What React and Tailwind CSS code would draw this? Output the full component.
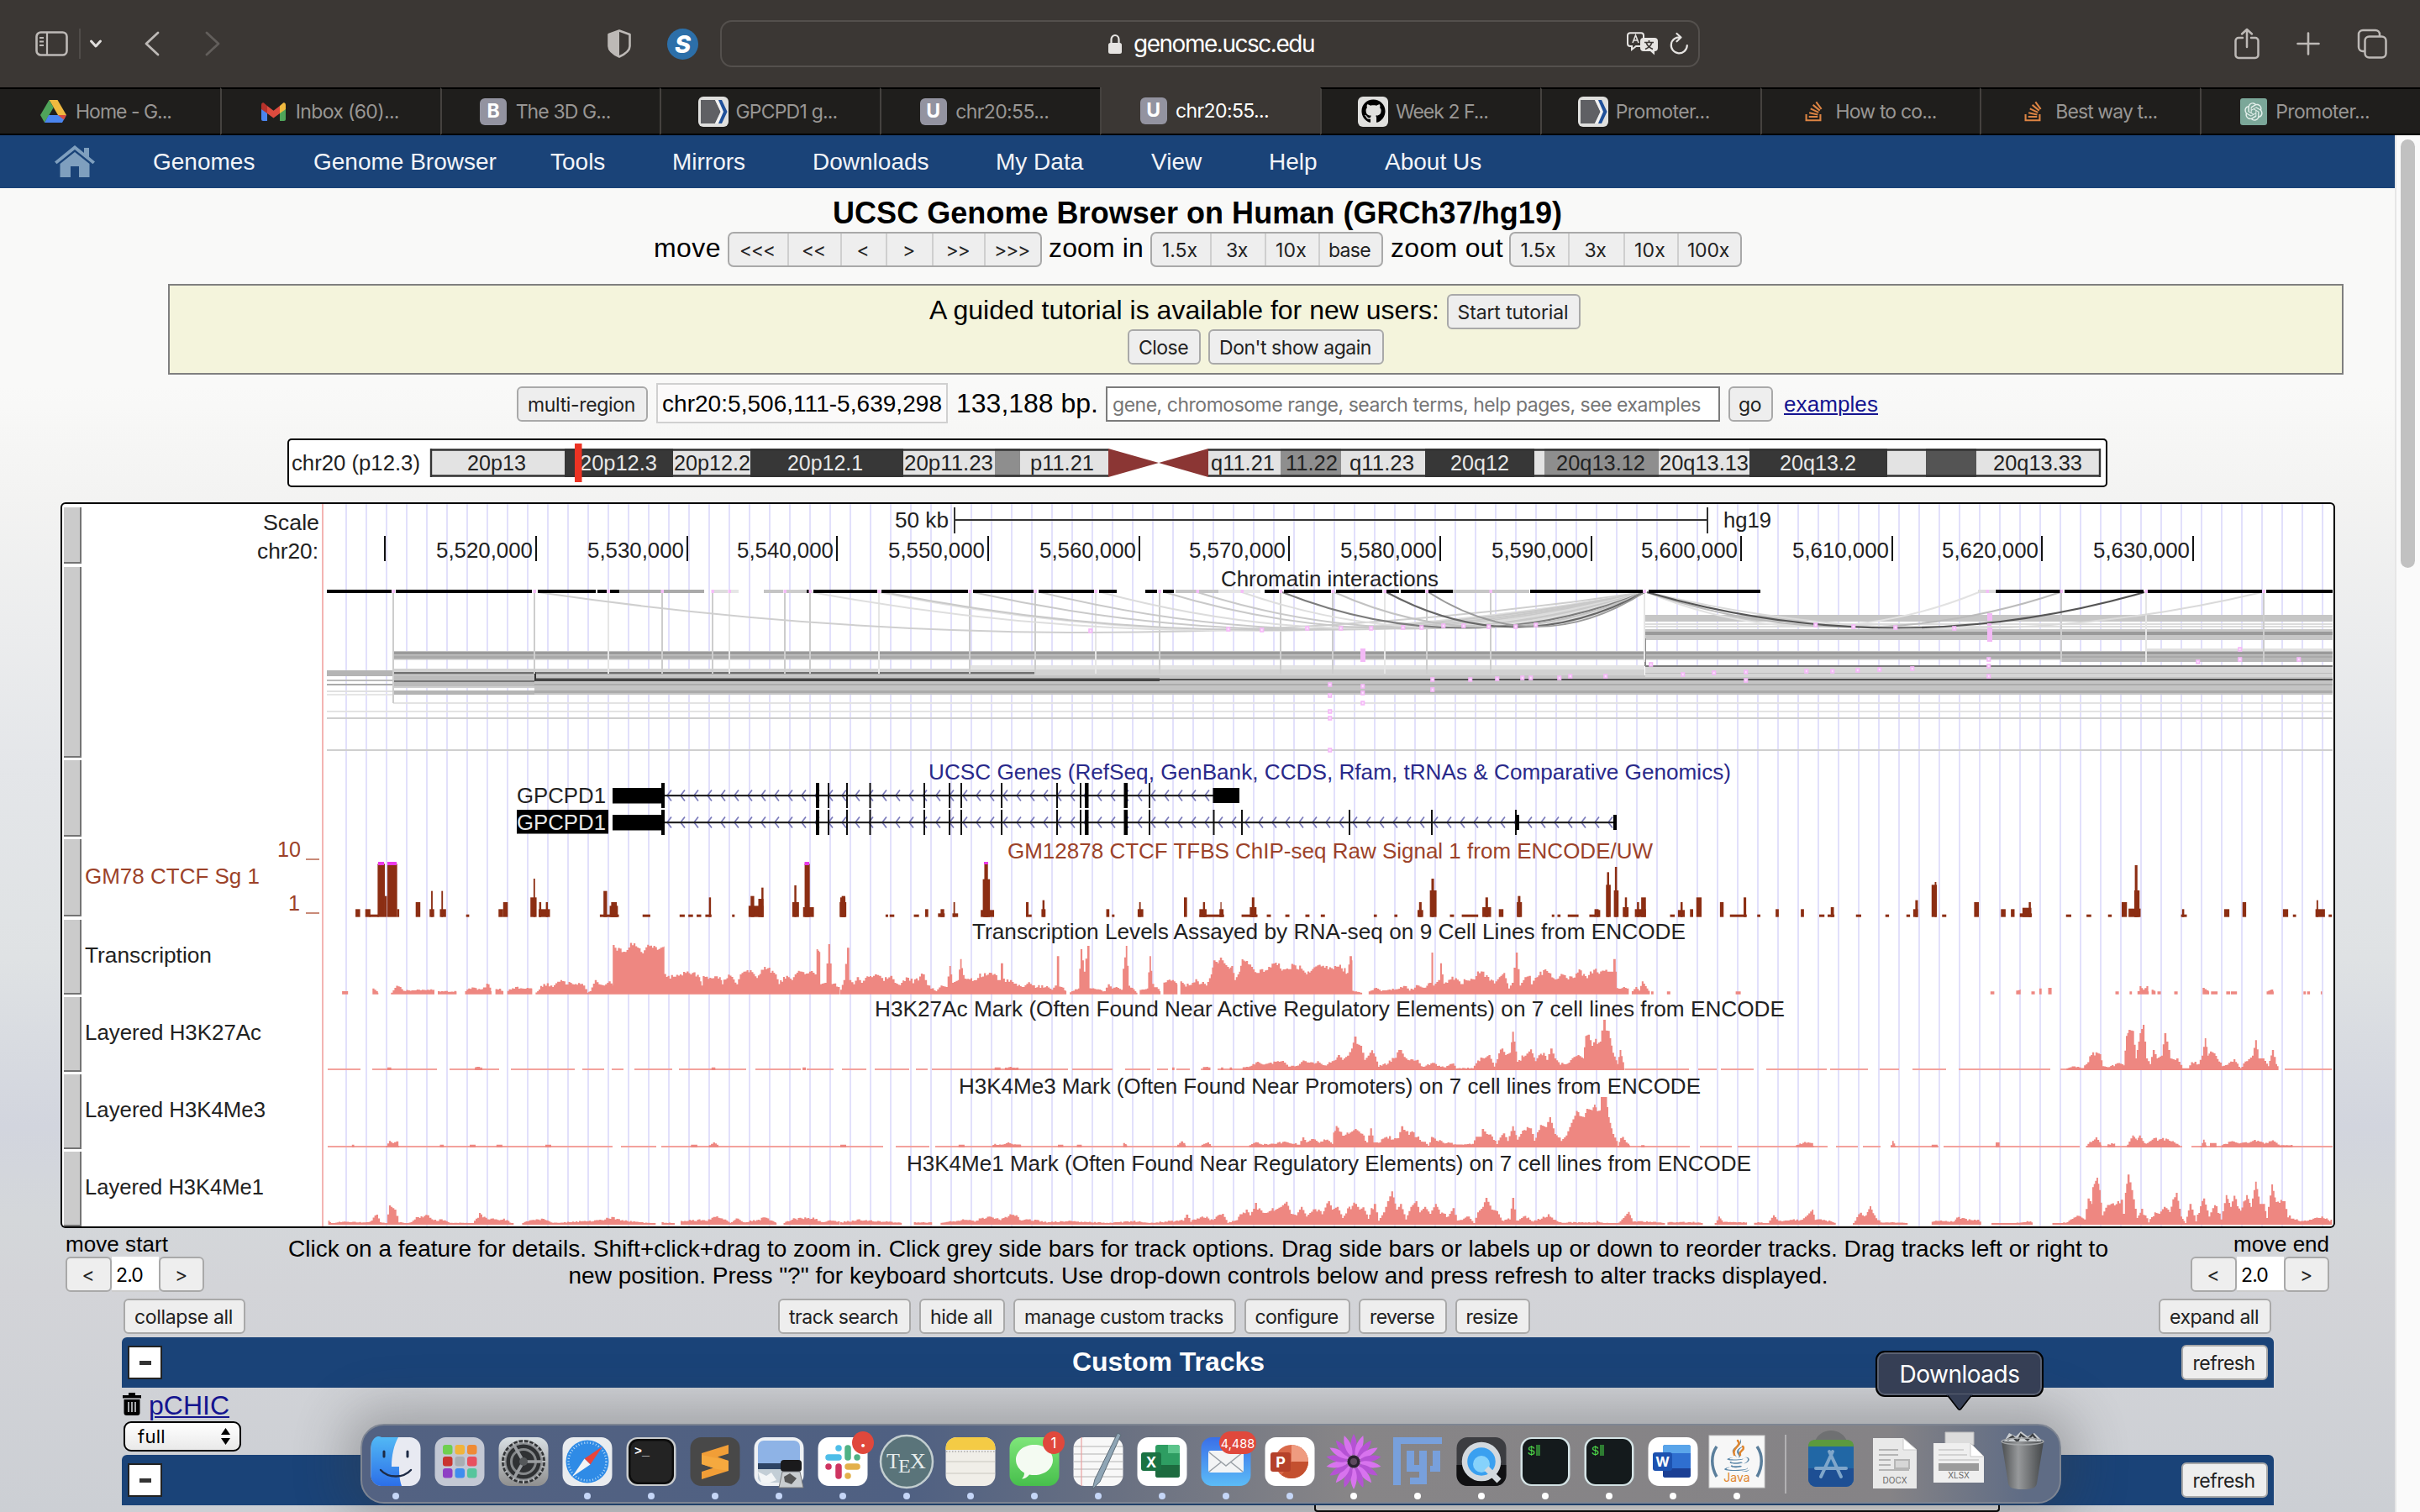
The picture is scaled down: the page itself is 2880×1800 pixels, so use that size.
import React, { useLayoutEffect, useRef } from "react";
import { FaStackOverflow, FaGithub, FaJava } from "react-icons/fa";
import { RiOpenaiFill } from "react-icons/ri";

/* Text spread over an exact width by letter spacing measured at run time. */
function Fit({ w, className = "", children }) {
  const ref = useRef(null);
  useLayoutEffect(() => {
    const el = ref.current;
    el.style.letterSpacing = "0px";
    const natural = el.getBoundingClientRect().width;
    el.style.letterSpacing = (w - natural) / children.length + "px";
  }, [w, children]);
  return (
    <span ref={ref} className={"inline-block whitespace-pre " + className}>
      {children}
    </span>
  );
}

const UI = "font-['Inter',sans-serif]";

function Btn({ className = "", tw, children }) {
  return (
    <span
      className={
        "flex h-[42px] shrink-0 items-center justify-center rounded-[6px] border-2 border-[#a9a9a9] bg-[#eeeeee] pt-[3px] pr-[2px] text-[23px] leading-none text-[#222] font-['Inter',sans-serif] " +
        className
      }
    >
      <Fit w={tw}>{children}</Fit>
    </span>
  );
}

function Group({ items, className = "" }) {
  return (
    <div className={"flex h-[42px] overflow-hidden rounded-[7px] border-2 border-[#a9a9a9] bg-[#eeeeee] " + className}>
      {items.map(([t, cls, tw], i) => (
        <span
          key={i}
          className={
            "flex shrink-0 items-center justify-center pt-[3px] pr-[3px] text-[23px] leading-none text-[#222] font-['Inter',sans-serif] " +
            (i ? "border-l-2 border-[#cfcfcf] " : "") +
            cls
          }
        >
          <Fit w={tw}>{t}</Fit>
        </span>
      ))}
    </div>
  );
}

/* ---------- browser chrome ---------- */

function Toolbar() {
  return (
    <div className="flex h-[104px] w-full items-center bg-[#3b3734] text-[#bdb9b6]">
      <svg className="ml-[42px] h-[30px] w-[39px]" viewBox="0 0 39 30" fill="none" stroke="currentColor" strokeWidth="2.6">
        <rect x="1.5" y="1.5" width="36" height="27" rx="5" />
        <path d="M14 2v26M5 8h5M5 12.500h5M5 17h5" strokeWidth="2.2" />
      </svg>
      <div className="ml-[13px] h-[36px] w-[2px] bg-[#504c49]" />
      <svg className="ml-[10px] h-[12px] w-[16px]" viewBox="0 0 16 12" fill="none" stroke="#e0dedc" strokeWidth="3" strokeLinecap="round" strokeLinejoin="round">
        <path d="M2.500 3 8 9l5.500-6" />
      </svg>
      <svg className="ml-[50px] h-[30px] w-[18px]" viewBox="0 0 18 30" fill="none" stroke="currentColor" strokeWidth="2.800" strokeLinecap="round" strokeLinejoin="round">
        <path d="M16 2 2 15l14 13" />
      </svg>
      <svg className="ml-[54px] h-[30px] w-[18px]" viewBox="0 0 18 30" fill="none" stroke="#625e5b" strokeWidth="2.800" strokeLinecap="round" strokeLinejoin="round">
        <path d="m2 2 14 13L2 28" />
      </svg>
      <svg className="ml-[461px] h-[34px] w-[28px]" viewBox="0 0 28 34">
        <path d="M14 1.500 26.500 6v14c0 6-7 10-12.500 12.500C8.500 30 1.500 26 1.500 20V6z" fill="none" stroke="currentColor" strokeWidth="2.600" strokeLinejoin="round" />
        <path d="M14 2v30C8.500 30 1.500 26 1.500 20V6z" fill="currentColor" />
      </svg>
      <div className="ml-[43px] flex size-[37px] items-center justify-center rounded-full bg-[#2c6fa9] font-['Inter',sans-serif] text-[29px] leading-none font-extrabold text-white italic">
        S
      </div>
      <div className="ml-[26px] flex h-[56px] w-[1166px] items-center rounded-[14px] border-2 border-[#54504d] text-[#e6e4e2]">
        <svg className="ml-[459px] h-[25px] w-[18px]" viewBox="0 0 18 25">
          <path d="M4.500 12V7a4.500 5 0 0 1 9 0v5" fill="none" stroke="currentColor" strokeWidth="2.200" />
          <rect x="1" y="11" width="16" height="13" rx="2.500" fill="currentColor" />
        </svg>
        <div className={"ml-[13px] text-[28px] leading-none text-white " + UI}>
          <Fit w={215}>genome.ucsc.edu</Fit>
        </div>
        <svg className="ml-[372px] h-[28px] w-[38px]" viewBox="0 0 38 28">
          <path d="M4 1.200h13a3 3 0 0 1 3 3V14a3 3 0 0 1-3 3h-6l-5 4v-4H4a3 3 0 0 1-3-3V4.200a3 3 0 0 1 3-3z" fill="none" stroke="currentColor" strokeWidth="2" />
          <path d="m7 13 3.500-9L14 13M8.200 10h4.600" fill="none" stroke="currentColor" strokeWidth="1.600" />
          <path d="M20 7h13a4 4 0 0 1 4 4v8a4 4 0 0 1-4 4v4.500L28 23h-8a4 4 0 0 1-4-4v-8a4 4 0 0 1 4-4z" fill="currentColor" />
          <path d="M21 12.500h11M26.500 10v2.500M30 12.500c-1.500 4-4 6.500-8 8M23 12.500c1.500 4 4 6.500 8 8" fill="none" stroke="#3b3734" strokeWidth="1.700" />
        </svg>
        <svg className="ml-[12px] h-[28px] w-[24px]" viewBox="0 0 24 28" fill="none" stroke="currentColor" strokeWidth="2.200" strokeLinecap="round" strokeLinejoin="round">
          <path d="M14 6.500a9.500 9.500 0 1 0 7.800 9.500M9.500 2l5 4.500-5 4.800" />
        </svg>
      </div>
      <svg className="ml-[636px] h-[38px] w-[30px]" viewBox="0 0 30 38" fill="none" stroke="currentColor" strokeWidth="2.500" strokeLinecap="round" strokeLinejoin="round">
        <path d="M10 12H5a3.500 3.500 0 0 0-3.500 3.500v17A3.500 3.500 0 0 0 5 36h20a3.500 3.500 0 0 0 3.500-3.500v-17A3.500 3.500 0 0 0 25 12h-5M15 23V2M9 7.500 15 2l6 5.500" />
      </svg>
      <svg className="ml-[44px] size-[28px]" viewBox="0 0 28 28" stroke="currentColor" strokeWidth="2.600" strokeLinecap="round">
        <path d="M14 1.500v25M1.500 14h25" />
      </svg>
      <svg className="ml-[44px] size-[36px]" viewBox="0 0 36 36" fill="none" stroke="currentColor" strokeWidth="2.500">
        <rect x="9.500" y="9.500" width="25" height="25" rx="5" />
        <path d="M9 27H7a5 5 0 0 1-5-5V7a5 5 0 0 1 5-5h15a5 5 0 0 1 5 5v2" />
      </svg>
    </div>
  );
}

function Letter({ c }) {
  return (
    <div className="flex size-[32px] items-center justify-center rounded-[6px] bg-[#9393a0] font-['Inter',sans-serif] text-[23px] leading-none font-bold text-white">
      {c}
    </div>
  );
}

function Chevron() {
  return (
    <svg className="size-[36px]" viewBox="0 0 36 36">
      <rect width="36" height="36" rx="6" fill="#e0e0de" />
      <path d="M3 4h17l7 14-7 14H3z" fill="#5f6064" />
      <path d="M20 4h3l7 14-7 14h-3l6.500-14z" fill="#f2f2f2" />
      <path d="M24 4h4l6.500 14L28 32h-4l6-14z" fill="#20519b" />
    </svg>
  );
}

const so = <FaStackOverflow className="size-[27px] text-[#dd8443]" />;

const tabs = [
  [
    "Home - G...",
    <svg className="h-[27px] w-[31px]" viewBox="0 0 31 27">
      <path d="M10.500 0h10L31 18H21z" fill="#f0b93f" />
      <path d="M10.500 0 0 18l5 9 10.700-18z" fill="#4fa45a" />
      <path d="M10 18h21l-5 9H5z" fill="#4b85ee" />
      <path d="M21 18h10l-3 5.500z" fill="#d94b3d" />
    </svg>,
  ],
  [
    "Inbox (60)...",
    <svg className="h-[22px] w-[29px]" viewBox="0 0 29 22">
      <path d="M0 6v14a2 2 0 0 0 2 2h5V9z" fill="#4b85ee" />
      <path d="M29 6v14a2 2 0 0 1-2 2h-5V9z" fill="#4fa45a" />
      <path d="M0 3v5l7 5V4L3 .6C1.500-.4 0 1 0 3z" fill="#b7322b" />
      <path d="M29 3v5l-7 5V4L26 .6c1.500-1 3 .4 3 2.400z" fill="#f0b93f" />
      <path d="m7 4 7.500 5.800L22 4v9l-7.500 5.600L7 13z" fill="#dd4b3e" />
    </svg>,
  ],
  ["The 3D G...", <Letter c="B" />],
  ["GPCPD1 g...", <Chevron />],
  ["chr20:55...", <Letter c="U" />],
  ["chr20:55...", <Letter c="U" />],
  [
    "Week 2 F...",
    <div className="flex size-[36px] items-center justify-center rounded-[6px] bg-[#e0e0de]">
      <FaGithub className="size-[29px] text-black" />
    </div>,
  ],
  ["Promoter...", <Chevron />],
  ["How to co...", so],
  ["Best way t...", so],
  [
    "Promoter...",
    <div className="flex size-[32px] items-center justify-center rounded-[3px] bg-[#7ba799]">
      <RiOpenaiFill className="size-[26px] text-[#e4efeb]" />
    </div>,
  ],
];
const tabW = [114, 123, 113, 121, 111, 111, 110, 112, 120, 121, 112];

function TabBar() {
  return (
    <div className="flex h-[57px] w-full">
      {tabs.map(([t, icon], i) => (
        <div
          key={i}
          className={
            "flex flex-1 items-center overflow-hidden border-b-2 border-b-black font-['Inter',sans-serif] text-[23px] leading-none " +
            (i === 5
              ? "bg-[#3b3734] text-white"
              : "border-t-2 border-t-black bg-[#1f1e1c] text-[#989694]") +
            (i ? " border-l-2 border-l-[#45423f] pl-[43px]" : " pl-[45px]")
          }
        >
          <div className="flex w-[37px] shrink-0 justify-center">{icon}</div>
          <div className="ml-[8px] pt-[2px]">
            <Fit w={tabW[i]}>{t}</Fit>
          </div>
        </div>
      ))}
    </div>
  );
}

function Nav() {
  return (
    <div className="flex h-[63px] w-full items-center bg-[#1a4378] text-[28px] leading-none whitespace-nowrap text-[#f2f4f8]">
      <div className="w-[182px] pb-[2px] pl-[65px]">
        <svg className="h-[38px] w-[48px]" viewBox="0 0 48 38" fill="#7f9fbe">
          <path d="M24 0 0 19.500l2.500 2.700L24 5l21.500 17.200L48 19.500l-7-5.700V3h-6v6z" />
          <path d="M24 8 6.500 22v16H19V25h10v13h12.500V22z" />
        </svg>
      </div>
      <span className="w-[191px]">Genomes</span>
      <span className="w-[282px]">Genome Browser</span>
      <span className="w-[145px]">Tools</span>
      <span className="w-[167px]">Mirrors</span>
      <span className="w-[218px]">Downloads</span>
      <span className="w-[185px]">My Data</span>
      <span className="w-[140px]">View</span>
      <span className="w-[138px]">Help</span>
      <span>About Us</span>
    </div>
  );
}

/* ---------- chromosome ideogram ---------- */

function L({ x, y, w, children, fill = "#222", size = 26 }) {
  return (
    <text x={x} y={y} textLength={w} lengthAdjust="spacingAndGlyphs" fontSize={size} fill={fill} fontFamily="'Liberation Sans', sans-serif">
      {children}
    </text>
  );
}

const bands = [
  [512, 672, "#e3e3e3", "20p13", 556, 70],
  [672, 801, "#373737", "20p12.3", 690, 92],
  [801, 893, "#e3e3e3", "20p12.2", 802, 91],
  [893, 1075, "#373737", "20p12.1", 937, 90],
  [1075, 1184, "#e3e3e3", "20p11.23", 1076, 106],
  [1184, 1214, "#8e8e8e"],
  [1214, 1319, "#e3e3e3", "p11.21", 1226, 76],
  [1438, 1524, "#e3e3e3", "q11.21", 1441, 76],
  [1524, 1596, "#8e8e8e", "11.22", 1530, 62],
  [1596, 1696, "#e3e3e3", "q11.23", 1606, 77],
  [1696, 1826, "#373737", "20q12", 1726, 70],
  [1826, 1838, "#e3e3e3"],
  [1838, 1974, "#8e8e8e", "20q13.12", 1852, 106],
  [1974, 2082, "#e3e3e3", "20q13.13", 1975, 106],
  [2082, 2246, "#373737", "20q13.2", 2118, 91],
  [2246, 2292, "#e3e3e3"],
  [2292, 2352, "#545454"],
  [2352, 2500, "#e3e3e3", "20q13.33", 2372, 106],
];

function Ideogram() {
  return (
    <div className="ml-[342px] h-[58px] w-[2166px] overflow-hidden rounded-[5px] bg-black p-[2px]">
      <svg className="block h-[54px] w-[2162px] rounded-[3px] bg-white" viewBox="344 524 2162 54">
        <L x={347} y={560} w={153}>chr20 (p12.3)</L>
        {bands.map(([a, b, c, t, tx, tw], i) => (
          <g key={i}>
            <rect x={a} y="534" width={b - a} height="34" fill={c} />
            {t && <L x={tx} y={560} w={tw} fill={c === "#373737" ? "#e8e8e8" : "#222"}>{t}</L>}
          </g>
        ))}
        <path d="M512 535.500H1319M512 566.500H1319M1438 535.500H2500M1438 566.500H2500M513 534V568M2499 534V568" stroke="#333" strokeWidth="2.400" />
        <path d="M1319 534 1379 551 1319 568zM1438 534 1379 551 1438 568z" fill="#8b3634" />
        <rect x="684" y="528" width="8.500" height="46" fill="#ec3323" />
      </svg>
    </div>
  );
}

/* ---------- signal data: x positions and y levels per third of the view ---------- */

const P = [
  [60, 1.6333],
  [1000, 1.6333],
  [1900, 1.6],
];
const X = (p, x) => P[p][0] + x / P[p][1];
const Y = (v) => 1000 + v / 3;
const hash = (n) => {
  const s = Math.sin(n * 127.1 + 11.7) * 43758.5453;
  return s - Math.floor(s);
};

const ctcf = [
  [[593,602,247],[612,622,247],[620,638,266],[636,650,85],[650,654,200],[655,674,85],[674,678,247],[710,719,222],[737,746,247],[740,743,182],[757,769,247],[760,763,182],[808,814,266],[871,880,247],[880,889,222],[933,945,205],[939,942,138],[949,971,247],[950,954,222],[963,967,222],[1068,1105,266],[1075,1082,182],[1087,1103,235],[1090,1101,222],[1151,1166,266],[1223,1233,266],[1240,1249,266],[1256,1265,266],[1273,1285,266],[1280,1284,205],[1325,1330,266],[1357,1386,235],[1361,1368,200],[1376,1386,210],[1382,1386,170],[1442,1455,222],[1446,1450,162],[1463,1484,240],[1466,1476,85],[1534,1547,222],[1538,1545,200]],
  [[0,10,205],[88,93,266],[96,105,266],[143,153,266],[165,171,247],[190,203,262],[195,202,247],[218,229,262],[220,223,222],[273,299,250],[277,291,140],[280,287,80],[361,366,222],[366,372,266],[391,399,247],[393,397,215],[517,523,247],[528,533,266],[578,589,247],[581,584,222],[668,674,205],[698,746,266],[698,712,247],[705,709,222],[737,745,247],[739,741,222],[780,811,266],[796,809,240],[800,805,205],[829,837,266],[865,873,266],[904,912,266],[934,942,266],[1037,1043,266],[1077,1083,266],[1122,1133,250],[1125,1130,222],[1146,1159,180],[1149,1154,138],[1185,1193,266],[1208,1240,266],[1248,1265,240],[1254,1259,205],[1280,1289,247],[1315,1325,222],[1317,1322,200],[1383,1388,266],[1394,1400,266],[1414,1435,266],[1456,1468,266],[1466,1474,247]],
  [[0,7,250],[18,27,160],[20,24,115],[33,42,180],[35,39,96],[50,61,240],[54,58,205],[73,94,247],[77,81,222],[85,94,205],[140,149,266],[155,168,250],[160,164,222],[178,184,247],[190,200,205],[235,242,222],[254,286,266],[280,285,205],[306,312,266],[341,347,247],[389,395,247],[424,434,266],[440,453,266],[446,452,240],[494,504,266],[550,557,266],[590,597,266],[603,612,247],[607,612,215],[638,648,160],[644,647,150],[658,666,266],[719,728,222],[770,779,247],[789,796,247],[806,829,262],[811,828,242],[823,827,222],[894,904,266],[933,942,266],[974,981,266],[1000,1010,222],[1013,1036,245],[1024,1034,180],[1025,1030,90],[1113,1124,266],[1115,1119,247],[1195,1205,247],[1230,1237,222],[1307,1317,247],[1326,1332,266],[1369,1387,247],[1371,1374,215],[1394,1400,266]],
];

const rna = [
  [567,540,577,540,578,551,626,530,636,545,637,551,662,545,672,520,685,538,745,535,746,551,753,541,788,541,789,551,806,540,812,528,835,535,850,515,856,540,857,551,865,530,879,540,880,551,888,538,903,528,935,530,936,551,943,545,958,515,975,525,985,505,1010,515,1035,520,1043,545,1048,540,1058,500,1065,515,1075,520,1085,505,1092,520,1093,385,1113,405,1130,370,1150,405,1160,372,1175,390,1192,380,1193,480,1213,495,1240,470,1260,490,1265,520,1268,495,1300,490,1305,510,1320,485,1333,515,1340,480,1350,465,1372,490,1390,458,1408,480,1415,515,1430,485,1440,500,1450,470,1465,480,1478,468,1485,480,1489,390,1494,400,1496,515,1505,510,1512,372,1518,510,1530,525,1534,540],
  [0,535,6,500,13,385,17,500,25,515,32,490,40,510,48,495,60,490,67,480,75,485,83,500,97,485,105,510,115,520,127,490,140,510,160,480,168,520,185,540,195,520,205,525,212,450,217,510,228,500,233,425,238,490,250,500,262,500,270,485,295,482,308,500,312,440,316,500,330,500,340,520,355,525,365,508,375,525,400,522,410,535,417,520,421,415,425,520,438,540,439,551,446,545,462,530,467,390,473,470,480,378,484,530,512,540,520,515,527,530,535,525,545,535,549,460,555,378,560,520,575,545,577,551,582,535,596,530,601,415,606,520,620,540,622,551,628,515,645,500,654,515,655,551,661,505,670,520,690,505,710,520,720,480,725,430,733,440,738,420,745,440,755,460,760,450,766,500,775,470,780,428,795,445,805,470,825,465,845,440,860,465,880,450,895,460,905,480,920,450,950,458,970,455,985,475,990,415,994,430,995,540,1013,545,1014,551,1027,540,1040,528,1050,538,1085,532,1097,522,1105,538,1122,520,1133,530,1145,510,1149,402,1152,520,1162,500,1166,440,1172,520,1188,490,1205,510,1228,500,1241,470,1255,490,1270,512,1280,490,1289,475,1298,530,1305,510,1313,402,1320,520,1330,490,1338,485,1342,515,1350,490,1372,468,1385,495,1400,485,1420,495,1435,470,1450,490,1467,460,1470,475],
  [0,475,20,470,30,470,32,425,36,470,38,530,60,530,61,551,67,540,74,525,80,538,86,505,95,530,101,551,104,541,107,541,108,551,134,541,139,541,140,551,265,541,273,541,274,551,750,541,756,541,757,551,799,538,806,534,807,551,828,541,833,541,834,551,843,530,846,530,847,551,860,528,865,528,866,551,988,541,993,541,994,551,1015,541,1018,541,1019,551,1030,540,1034,522,1040,535,1047,522,1050,541,1051,551,1057,535,1063,541,1064,551,1068,541,1073,541,1074,551,1100,541,1105,541,1106,551,1154,528,1165,541,1166,551,1170,541,1181,541,1182,551,1199,541,1205,541,1206,551,1208,541,1218,541,1219,551,1276,541,1284,534,1288,541,1289,551,1346,541,1349,541,1350,551,1353,541,1357,541,1358,551,1379,541,1381,541],
];
const ac27 = [
  [655,812,661,812,662,822,825,812,838,812,839,822,1285,812,1291,812,1292,822,1462,812,1468,812],
  [300,812,310,812,311,822,320,812,345,812,346,822,645,812,648,812,649,822,705,812,718,812,719,822,740,812,743,812,744,822,757,812,760,812,761,822,782,812,795,810,810,792,820,803,835,795,862,795,870,810,885,808,902,790,910,798,930,795,940,808,955,790,962,785,967,768,975,785,985,770,993,745,999,702,1003,728,1010,735,1018,785,1025,770,1032,750,1045,808,1060,800,1075,780,1088,750,1095,775,1105,790,1120,785,1128,810,1150,800,1175,812,1190,798,1196,815,1228,815,1238,788,1250,780,1260,768,1270,808,1285,745,1292,768,1301,760,1306,685,1315,790,1330,770,1341,748,1350,790,1360,758,1372,785,1380,745,1388,780,1398,800,1412,800,1425,775,1433,768,1443,780,1448,700,1453,695,1460,735,1467,710,1470,725],
  [0,728,6,720,9,680,13,642,17,680,22,682,30,760,39,800,44,750,52,815,53,822,895,815,905,810,925,815,938,780,950,758,958,765,963,808,975,812,990,800,1003,805,1008,700,1013,678,1020,682,1026,780,1034,690,1040,660,1046,780,1053,800,1059,750,1066,780,1075,770,1081,690,1092,780,1100,785,1104,780,1115,815,1125,815,1132,795,1145,800,1152,770,1158,708,1163,770,1168,755,1178,765,1190,808,1200,802,1213,788,1225,815,1237,790,1248,770,1254,715,1260,780,1268,780,1278,808,1286,750,1293,800,1298,815],
];
const me3 = [
  [586,1088,589,1088,590,1098,652,1092,658,1075,664,1082,672,1076,676,1092,677,1098,757,1088,763,1088,764,1098,815,1088,825,1088,826,1098,867,1088,877,1088,878,1098,962,1088,972,1088,973,1098,1245,1088,1256,1088,1257,1098,1280,1090,1288,1080,1298,1092],
  [0,1088,10,1088,11,1098,230,1088,240,1088,241,1098,296,1088,318,1086,325,1080,335,1088,350,1088,351,1098,423,1088,432,1088,433,1098,460,1088,468,1088,469,1098,550,1082,556,1090,557,1098,655,1088,662,1076,670,1088,671,1098,702,1088,713,1080,720,1092,721,1098,795,1090,806,1078,820,1088,865,1080,890,1088,898,1062,905,1080,915,1070,930,1082,945,1070,955,1085,958,1045,963,1032,975,1055,990,1045,1000,1032,1010,1045,1022,1080,1030,1030,1036,1080,1045,1080,1060,1065,1083,1065,1090,1022,1098,1048,1110,1050,1125,1070,1138,1085,1142,1095,1148,1065,1170,1080,1200,1088,1228,1085,1235,1060,1243,1060,1247,1032,1255,1050,1262,1055,1275,1085,1288,1048,1296,1075,1306,1022,1315,1070,1325,1040,1340,1030,1348,1070,1360,1018,1370,1025,1378,990,1388,1050,1400,1075,1410,1055,1420,1010,1430,972,1445,990,1450,960,1460,965,1465,945,1470,965],
  [0,968,7,965,8,918,17,918,22,990,30,1050,37,1075,40,1095,45,1062,62,1090,63,1098,85,1090,90,1090,91,1098,380,1090,392,1082,408,1082,412,1092,413,1098,560,1090,563,1075,568,1092,569,1098,638,1088,648,1088,649,1098,760,1080,766,1080,767,1098,932,1092,950,1062,960,1088,961,1098,973,1088,986,1084,987,1098,1010,1088,1020,1055,1028,1072,1033,1055,1042,1085,1060,1070,1080,1070,1105,1085,1110,1098,1150,1095,1155,1070,1160,1090,1161,1098,1168,1082,1178,1082,1180,1098,1190,1090,1212,1075,1225,1085,1255,1075,1270,1085,1286,1075,1300,1090,1325,1090],
];
const me1 = [
  [540,1360,545,1372,560,1365,620,1365,633,1338,640,1365,652,1370,658,1305,668,1320,676,1365,690,1370,700,1365,710,1350,732,1340,740,1358,765,1358,775,1368,820,1368,833,1338,845,1350,865,1358,880,1355,895,1368,900,1374,917,1368,940,1355,960,1355,975,1368,1060,1360,1090,1350,1110,1360,1175,1370,1176,1374,1188,1366,1212,1368,1213,1374,1225,1362,1260,1358,1275,1360,1288,1345,1310,1355,1320,1368,1335,1352,1345,1366,1372,1358,1390,1350,1410,1370,1411,1374,1425,1368,1440,1355,1478,1350,1500,1366,1520,1358,1534,1366],
  [0,1366,35,1358,105,1366,118,1368,119,1374,143,1366,177,1366,178,1374,195,1366,225,1362,240,1355,260,1362,275,1350,295,1350,310,1358,335,1335,350,1358,380,1358,400,1365,450,1362,520,1368,570,1362,600,1368,640,1362,665,1360,672,1338,680,1362,705,1345,720,1358,742,1335,752,1368,770,1355,788,1320,795,1340,806,1305,820,1335,845,1320,855,1310,866,1292,875,1335,885,1340,895,1310,905,1345,915,1325,935,1330,948,1290,955,1320,965,1310,975,1350,985,1325,1000,1300,1008,1320,1015,1312,1025,1350,1037,1300,1045,1360,1055,1330,1063,1290,1071,1255,1080,1320,1088,1300,1098,1355,1108,1310,1118,1290,1125,1330,1135,1310,1145,1335,1156,1300,1165,1330,1180,1345,1190,1315,1198,1362,1220,1345,1230,1368,1238,1330,1248,1310,1254,1278,1265,1320,1275,1325,1285,1360,1300,1355,1306,1278,1313,1360,1330,1345,1345,1362,1375,1342,1395,1366,1470,1366],
  [0,1362,12,1368,38,1372,50,1350,60,1328,68,1362,120,1366,130,1374,135,1366,180,1365,201,1368,202,1374,225,1372,232,1345,240,1365,285,1366,286,1374,300,1366,325,1368,336,1340,345,1362,390,1356,400,1340,410,1320,415,1356,445,1362,455,1374,488,1372,498,1335,512,1340,520,1308,528,1345,540,1365,590,1368,592,1374,638,1362,680,1362,685,1348,705,1358,725,1356,732,1374,752,1370,790,1370,825,1362,830,1374,868,1372,895,1365,905,1350,920,1345,928,1355,935,1280,942,1300,944,1240,952,1206,957,1250,962,1340,972,1300,985,1310,998,1285,1002,1335,1006,1260,1011,1195,1018,1250,1028,1350,1037,1322,1050,1366,1062,1330,1070,1335,1080,1310,1090,1325,1103,1260,1112,1345,1120,1368,1129,1300,1140,1360,1155,1280,1165,1345,1176,1300,1188,1355,1198,1268,1206,1310,1213,1272,1225,1330,1237,1268,1245,1310,1254,1220,1262,1300,1270,1300,1275,1350,1285,1230,1293,1300,1308,1290,1315,1345,1335,1360,1360,1358,1380,1345,1395,1362,1400,1350],
];

/* Stepped area outline, two pixels per step, with a little deterministic jitter. */
function area(data, base) {
  const yb = Y(base);
  let d = "";
  data.forEach((a, p) => {
    for (let i = 0; i + 3 < a.length; i += 2) {
      if (a[i + 1] >= base) continue;
      const x0 = X(p, a[i]);
      const x1 = X(p, a[i + 2]);
      const v1 = Math.min(a[i + 3], base - 4);
      const n = Math.max(1, Math.round((x1 - x0) / 2));
      for (let k = 0; k < n; k++) {
        const xa = x0 + ((x1 - x0) * k) / n;
        const xb = x0 + ((x1 - x0) * (k + 1)) / n + 0.3;
        const v = a[i + 1] + ((v1 - a[i + 1]) * k) / n;
        const h = (base - v) / 3;
        const j = n > 3 ? (hash(xa + base) - 0.4) * Math.min(6, h * 0.4) : 0;
        d += `M${xa.toFixed(1)} ${yb}V${(yb - Math.max(2, h + j)).toFixed(1)}H${xb.toFixed(1)}V${yb}z`;
      }
    }
  });
  return d;
}

function baseline(y, chance, seed) {
  let d = "";
  let x = 390;
  let n = seed;
  while (x < 2772) {
    const len = 8 + hash(n++) * 70;
    const end = Math.min(2776, x + len);
    d += `M${x.toFixed(0)} ${y}H${end.toFixed(0)}`;
    x = end + (hash(n++) < chance ? 4 + hash(n++) * 12 : 0);
  }
  return d;
}

const gridX = Array.from({ length: 99 }, (_, i) => 412 + i * 24);
const ticks = [458, 638, 818, 996, 1176, 1356, 1534, 1714, 1894, 2072, 2252, 2430, 2610];
const sideBars = [[604, 671], [675, 902], [905, 996], [999, 1091], [1095, 1184], [1187, 1276], [1279, 1368], [1371, 1460]];
const blocks = [
  [389,466,"#000"],[471,633,"#000"],[640,709,"#000"],[711,722,"#000"],[726,737,"#000"],[737,787,"#aaa"],[790,838,"#aaa"],[850,866,"#ddd"],[870,879,"#e6e6e6"],[909,932,"#c4c4c4"],[936,960,"#ccc"],[960,963,"#000"],[968,1044,"#000"],[1049,1152,"#000"],[1158,1230,"#000"],[1236,1302,"#000"],[1308,1329,"#000"],[1363,1377,"#000"],[1384,1397,"#000"],[1399,1450,"#c4c4c4"],[1450,1500,"#e6e6e6"],[1505,1522,"#000"],[1528,1584,"#000"],[1590,1645,"#000"],[1650,1665,"#000"],[1667,1696,"#000"],[1700,1729,"#000"],[1729,1820,"#c6c6c6"],[1821,1955,"#000"],[1962,2095,"#000"],[2354,2374,"#ddd"],[2375,2452,"#000"],[2457,2551,"#000"],[2556,2692,"#000"],[2697,2776,"#000"],
];
const anchors = [468,636,724,788,848,868,934,964,1046,1154,1232,1304,1380,1425,1478,1524,1586,1648,1698,1774,1957,2365,2453,2554,2694];
const arcs = [
  [640,"#cfcfcf",97],[966,"#dedede",92],[1046,"#e2e2e2",93],[1052,"#c9c9c9",91],[1158,"#c9c9c9",90],[1238,"#c9c9c9",90],[1310,"#dcdcdc",88],[1386,"#c9c9c9",88],[1425,"#c9c9c9",86],[1478,"#dedede",85],[1526,"#7c7c7c",86],[1588,"#c2c2c2",84],[1650,"#666",84],[1700,"#9a9a9a",83],
];
/* Horizontal strips: x0, x1, y0, y1, colour */
const strips = [
  [468,2776,775,785.5,"#c0c0c0"],[468,2776,776,779,"#9a9a9a"],[468,2776,780.500,784,"#a9a9a9"],
  [389,468,798,805,"#b4b4b4"],[389,468,809,811,"#bbb"],[389,468,814,816,"#aaa"],[389,468,822,824,"#e0e0e0"],[389,468,826,828,"#e6e6e6"],
  [468,1957,796,804,"#d2d2d2"],[1154,1957,792,797,"#e3e3e3"],[468,1231,800,802.500,"#717171"],
  [468,636,804,817,"#bcbcbc"],[468,636,817,819,"#cfcfcf"],[468,636,810,812,"#777"],[468,636,822,827,"#b4b4b4"],
  [636,2776,804,827,"#c4c4c4"],[636,2776,814,816,"#acacac"],[636,2776,822,825,"#ababab"],
  [636,1380,807.500,811,"#444"],[1380,2776,808,810,"#505050"],
  [468,2776,836,838,"#e3e3e3"],[389,2776,846,848,"#e3e3e3"],[389,2776,854,856,"#cfcfcf"],[389,2776,892,894,"#cfcfcf"],
  [1958,2776,732,740,"#c6c6c6"],[1958,2776,742,744,"#dcdcdc"],[1958,2776,745,747,"#dcdcdc"],[1958,2776,749,762,"#c6c6c6"],[1958,2776,752,756,"#9a9a9a"],
  [1958,2776,793,806,"#d6d6d6"],[1958,2776,792,794,"#7a7a7a"],[1958,2776,801,802,"#bdbdbd"],
  [2454,2776,783,788,"#b9b9b9"],[2555,2776,772,775,"#e0e0e0"],
];
const pinks = [
  [1298,751],[1462,749],[1502,750],[1556,748],[1596,748],[1632,748],[1670,747],[1692,747],[1718,745],[1742,745],[1772,746],[1804,746],[1828,744],[1583,815],[1583,828],[1583,847],[1583,855],[1583,893],[1622,817],[1622,825],[1622,837],[1705,809],[1705,821],[1750,809],[1782,808],[1812,807],[1822,807],[1856,807],[1869,805],[1911,805],[1965,791],[2003,803],[2040,801],[2078,800],[2078,810],[2150,799],[2181,799],[2211,798],[2237,797],[2276,796],[2161,744],[2206,746],[2256,747],[2326,748],[2367,785],[2367,793],[2367,805],[2616,788],[2666,773],[2666,785],[2736,785],
];
const tallExons = [986,1008,1035.5,1100,1130,1144,1192,1258,1286,1368];

function Gene({ y, end, extra }) {
  const arrows = [];
  for (let x = 794; x < end - 6; x += 16) arrows.push(`M${x + 5} ${y - 6.5}L${x} ${y}L${x + 5} ${y + 6.5}`);
  return (
    <g>
      <path d={arrows.join("")} fill="none" stroke="#7b7bbb" strokeWidth="1.700" />
      <rect x="790" y={y - 1} width={end - 790} height="2.200" fill="#222" />
      <rect x="729" y={y - 9} width="59" height="18.500" />
      <rect x="787" y={y - 15} width="4" height="30" />
      <rect x="971" y={y - 15} width="4" height="30" />
      <rect x="1291" y={y - 15} width="4.500" height="30" />
      <rect x="1337.500" y={y - 15} width="4.500" height="30" />
      {tallExons.concat(extra).map((x) => (
        <rect key={x} x={x - 1} y={y - 15} width="2" height="30" fill="#111" />
      ))}
    </g>
  );
}

function Tracks() {
  return (
    <div className="ml-[72px] h-[864px] w-[2707px] overflow-hidden rounded-[6px] bg-black p-[2px]">
      <svg className="block h-[860px] w-[2703px] rounded-[4px] bg-white" viewBox="74 600 2703 860">
        <path d={gridX.map((x) => `M${x} 600V1460`).join("")} stroke="#e2e0fb" strokeWidth="2" />
        <path d="M384 600V1460" stroke="#f3b4b2" strokeWidth="2" />
        {sideBars.map(([a, b]) => (
          <g key={a}>
            <rect x="76" y={a} width="21" height={b - a} fill="#cbcbcb" />
            <path d={`M76 ${b - 1}H97M96 ${a}V${b}`} stroke="#747474" strokeWidth="2" />
          </g>
        ))}
        <L x={313} y={631} w={67}>Scale</L>
        <L x={306} y={665} w={73}>chr20:</L>
        <L x={1065} y={628} w={64}>50 kb</L>
        <L x={2051} y={628} w={57}>hg19</L>
        <path d="M1136 604V635M2032 604V635M1136 619H2032" stroke="#333" strokeWidth="2" />
        {ticks.map((x, i) => (
          <g key={x}>
            <rect x={x - 1} y="638" width="2" height="30" fill="#111" />
            {i > 0 && <L x={x - 119} y={664} w={115}>{`5,${510 + i * 10},000`}</L>}
          </g>
        ))}
        <L x={1453} y={698} w={259}>Chromatin interactions</L>

        {strips.map(([a, b, c, d, f], i) => (
          <rect key={i} x={a} y={c} width={b - a} height={d - c} fill={f} />
        ))}
        <rect x="636" y="800" width="2" height="10" fill="#333" />
        <rect x="1957" y="760" width="2" height="33" fill="#888" />
        {anchors.map((x, i) => (
          <rect key={x} x={x - 1} y="706" width="2" height={x === 468 ? 131 : x < 1957 ? (x === 1425 || x === 1478 ? 0 : 96) : x === 2365 ? 0 : 82} fill={i % 3 === 2 ? "#e6e6e6" : "#cdcdcd"} />
        ))}
        <path d="M1700 742Q1850 728 1955 706Q1890 748 1810 745Q1750 750 1700 742z" fill="#e2e2e2" />
        <g fill="none" strokeWidth="2">
          {arcs.map(([x, c, h]) => (
            <path key={x} d={`M${x} 705Q${(x + 1957) / 2} ${704 + h} 1957 705`} stroke={c} />
          ))}
          <path d="M1960 705Q2157 786 2355 705" stroke="#e2e2e2" />
          <path d="M1960 705Q2206 788 2452 705" stroke="#bbb" />
          <path d="M1960 705Q2326 792 2692 705" stroke="#dadada" />
          <path d="M1960 705Q2256 790 2552 705" stroke="#555" strokeWidth="2.200" />
        </g>
        {blocks.map(([a, b, c]) => (
          <rect key={a} x={a} y="702" width={b - a} height="4" fill={c} />
        ))}
        {anchors.map((x) => (
          <rect key={x} x={x - 1.5} y="702" width="3.500" height="4" fill="#f5bdf8" />
        ))}
        {pinks.map(([x, y], i) => (
          <rect key={i} x={x - 2} y={y - 2} width="3.500" height="4" fill="#fbe2fd" stroke="#f5b8f8" strokeWidth="1.600" />
        ))}
        <rect x="1619" y="772" width="6" height="16" fill="#f3b9f6" />
        <rect x="2365" y="730" width="6" height="9" fill="#f3b9f6" />
        <rect x="2365" y="742" width="5" height="3" fill="#f3b9f6" />
        <rect x="2365" y="747" width="6" height="17" fill="#f3b9f6" />

        <L x={1105} y={928} w={955} fill="#29298a">{"UCSC Genes (RefSeq, GenBank, CCDS, Rfam, tRNAs & Comparative Genomics)"}</L>
        <L x={615} y={956} w={106}>GPCPD1</L>
        <rect x="615" y="964" width="109" height="28.500" />
        <L x={615} y={988} w={106} fill="#e8e8e8">GPCPD1</L>
        <Gene y={947} end={1444} extra={[]} />
        <rect x="1443.500" y="938" width="31.500" height="18" />
        <Gene y={979} end={1922} extra={[1444.5, 1478, 1606, 1704, 1804]} />
        <rect x="1804" y="970" width="4" height="18" />
        <rect x="1920" y="970" width="4" height="18" />

        <L x={1199} y={1022} w={768} fill="#9c4229">GM12878 CTCF TFBS ChIP-seq Raw Signal 1 from ENCODE/UW</L>
        <L x={330} y={1020} w={28} fill="#9c4229">10</L>
        <L x={343} y={1084} w={14} fill="#9c4229">1</L>
        <path d="M364 1023H380M364 1087H380" stroke="#c98a78" strokeWidth="2" />
        <L x={101} y={1052} w={208} fill="#9c4229">GM78 CTCF Sg 1</L>
        {ctcf.map((list, p) =>
          list.map(([a, b, v], i) => (
            <rect key={p + "-" + i} x={X(p, a)} y={Y(v)} width={(b - a) / P[p][1]} height={Y(275) - Y(v)} fill="#8c2e13" />
          ))
        )}
        <path d="M450 1026H457V1030H450zM461 1026H472V1030H461zM957.500 1026H963V1030H957.500zM1171 1026H1176V1029H1171z" fill="#ea3bea" />

        <L x={101} y={1146} w={151}>Transcription</L>
        <L x={1157} y={1118} w={849}>Transcription Levels Assayed by RNA-seq on 9 Cell Lines from ENCODE</L>
        <path d={area(rna, 551)} fill="#ee8781" />
        <L x={101} y={1238} w={210}>Layered H3K27Ac</L>
        <L x={1041} y={1210} w={1083}>H3K27Ac Mark (Often Found Near Active Regulatory Elements) on 7 cell lines from ENCODE</L>
        <path d={baseline(1273, 0.8, 3)} stroke="#f3a29d" strokeWidth="2" />
        <path d={area(ac27, 822)} fill="#ee8781" />
        <L x={101} y={1330} w={215}>Layered H3K4Me3</L>
        <L x={1141} y={1302} w={883}>H3K4Me3 Mark (Often Found Near Promoters) on 7 cell lines from ENCODE</L>
        <path d={baseline(1365, 0.35, 41)} stroke="#f3a29d" strokeWidth="2" />
        <path d={area(me3, 1098)} fill="#ee8781" />
        <L x={101} y={1422} w={213}>Layered H3K4Me1</L>
        <L x={1079} y={1394} w={1005}>H3K4Me1 Mark (Often Found Near Regulatory Elements) on 7 cell lines from ENCODE</L>
        <path d={area(me1, 1374)} fill="#ee8781" />
      </svg>
    </div>
  );
}

/* ---------- lower controls ---------- */

function Mover({ label, lw, className }) {
  return (
    <div className={"flex flex-col " + className}>
      <div className="h-[32px] pt-[3px] text-[26px] leading-[32px]">
        <Fit w={lw}>{label}</Fit>
      </div>
      <div className="mt-[2px] flex self-start">
        <Btn className="w-[55px]" tw={14}>{"<"}</Btn>
        <div className="flex h-[42px] w-[56px] items-center border-b-2 border-[#ccc] bg-white pt-[4px] pl-[5px] font-['Inter',sans-serif] text-[23px] leading-none">
          <Fit w={32}>2.0</Fit>
        </div>
        <Btn className="w-[54px]" tw={14}>{">"}</Btn>
      </div>
    </div>
  );
}

function SectionBar({ title }) {
  return (
    <div className="ml-[145px] flex h-[60px] w-[2561px] items-center rounded-t-[6px] bg-[#1a4378] px-[7px]">
      <div className="flex h-[40px] w-[41px] items-center justify-center border-2 border-[#222] bg-white">
        <div className="h-[5px] w-[14px] bg-[#333]" />
      </div>
      <div className="ml-[1083px] flex-1 pb-[2px] text-[32px] leading-none font-bold text-white">{title && <Fit w={229}>{title}</Fit>}</div>
      <Btn className="w-[103px]" tw={74}>refresh</Btn>
    </div>
  );
}

/* ---------- dock ---------- */

const sq = (fill, extra = {}) => <rect x="-29.500" y="-29" width="59" height="58" rx="13" fill={fill} {...extra} />;

function Badge({ x, w = 26, t, size = 17 }) {
  return (
    <g>
      <rect x={x - w / 2} y="-36" width={w} height="27" rx="13.500" fill="#e0483c" />
      <text x={x} y="-16.500" textAnchor="middle" fontSize={size} fill="#fff" fontFamily="Inter, sans-serif">{t}</text>
    </g>
  );
}

const petals = Array.from({ length: 18 }, (_, i) => i * 20);
const gears = Array.from({ length: 24 }, (_, i) => i * 15);

const terminalIcon = (
  <g>
    {sq("#d5e4e6")}
    <rect x="-27" y="-27" width="54" height="54" rx="11" fill="#141a1c" />
    <text x="-21" y="-8" fontSize="15" fill="#4fd44a" fontFamily="'Liberation Mono', monospace">$</text>
    <rect x="-11" y="-20" width="5" height="13" fill="#2e7d32" />
  </g>
);

const dockIcons = [
  <g>
    {sq("#e8eaf2")}
    <path d="M3-29h-20a9 13 0 0 0-12.500 12v34a13 12 0 0 0 12 12H7C4 20 4 12 4 6h-9c0-14 3-26 8-35z" fill="url(#finder)" />
    <path d="M-14-12v6M14-12v6" stroke="#1d2b45" strokeWidth="3" strokeLinecap="round" />
    <path d="M-18 10c9 10 27 10 36 0" fill="none" stroke="#1d2b45" strokeWidth="2.400" strokeLinecap="round" />
  </g>,
  <g>
    {sq("#c3c8d4")}
    {["#6fcf4f","#f0b43c","#ef8a35","#c9342f","#a8adb3","#e8505f","#8e3fc4","#3f8def","#56c59c"].map((c, i) => (
      <rect key={c} x={-20 + (i % 3) * 14.500} y={-20 + Math.floor(i / 3) * 14} width="11.500" height="11.500" rx="3" fill={c} />
    ))}
  </g>,
  <g>
    {sq("url(#silver)")}
    <circle r="26" fill="#2f3133" />
    <circle r="22" fill="none" stroke="#8e9194" strokeWidth="3" />
    {gears.map((a) => <rect key={a} x="-1" y="-26" width="2" height="4" fill="#b5b8ba" transform={`rotate(${a})`} />)}
    <circle r="14.500" fill="none" stroke="#85888a" strokeWidth="3" />
    <path d="M0 0H22M0 0-11-19M0 0-11 19" stroke="#9a9da0" strokeWidth="3.500" />
    <circle r="5" fill="#55585a" />
  </g>,
  <g>
    {sq("#e9ecef")}
    <circle r="25.500" fill="#2f8be6" />
    <circle r="22.500" fill="none" stroke="#b7dbf8" strokeWidth="2.500" strokeDasharray="1 2.500" />
    <path d="m18-18-14.500 21.500-7-7z" fill="#e8453a" />
    <path d="M-18 18-3.500-3.500l7 7z" fill="#f4f4f4" />
  </g>,
  <g>
    {sq("#c9ccce")}
    <rect x="-27" y="-27" width="54" height="54" rx="11" fill="#0c0c0c" />
    <rect x="-24.500" y="-24.500" width="49" height="49" rx="9" fill="#232323" />
    <text x="-20" y="-8" fontSize="15" fill="#fff" fontFamily="'Liberation Mono', monospace" fontWeight="bold">{">_"}</text>
  </g>,
  <g>
    {sq("#484848")}
    <path d="M16-20-16-10V3l14 4.500L-16 12v9L16 11V-1L3-5.500 16-9.500z" fill="#f19e37" />
    <path d="M-16-8-16 3l18 6L16 11V-1z" fill="#f5a93f" />
  </g>,
  <g>
    {sq("#eef1f4")}
    <rect x="-25" y="-25" width="50" height="50" rx="7" fill="#8eb3e6" />
    <path d="M-25 2h50v8h-50z" fill="#2d4465" />
    <path d="M-25 9h50v9a7 7 0 0 1-7 7h-36a7 7 0 0 1-7-7z" fill="#c3ced6" />
    <path d="m-25 12 10 5 6-4 6 9-8 3h-10z" fill="#f3f5f6" />
    <rect x="2" y="-2" width="25" height="14" rx="4" fill="#1a1a1c" />
    <path d="M4 12h21l4 19H0z" fill="#c9cdd0" stroke="#77797c" />
    <path d="m6 18 7-4 8 6-6 7-8-3z" fill="#555" />
  </g>,
  <g>
    {sq("#fff")}
    <g strokeWidth="7.500" strokeLinecap="round">
      <path d="M-5-16v0M-17-5h12" stroke="#4dbde8" />
      <path d="M6-16v11M17-5h0" stroke="#4fb184" />
      <path d="M6 6h11M6 17h0" stroke="#e3b04a" />
      <path d="M-17 6h0M-5 6v11" stroke="#ce3460" />
    </g>
    <Badge x={24} t="•" size={12} />
  </g>,
  <g>
    <circle r="31" fill="#5a747a" stroke="#c3ced0" strokeWidth="2.500" />
    <text x="-24" y="8" fontSize="26" fill="#e6ecec" fontFamily="'Liberation Serif', serif">T</text>
    <text x="-10" y="13" fontSize="24" fill="#e6ecec" fontFamily="'Liberation Serif', serif">E</text>
    <text x="4" y="8" fontSize="26" fill="#e6ecec" fontFamily="'Liberation Serif', serif">X</text>
  </g>,
  <g>
    {sq("#f0eee8")}
    <path d="M-29.500-14v-2a13 13 0 0 1 13-13h33a13 13 0 0 1 13 13v2z" fill="#f4cb45" />
    <path d="M-29-12h58" stroke="#aaa" strokeWidth="1.500" strokeDasharray="1.500 2" />
    <path d="M-29 0h58M-29 14h58" stroke="#d5d3cc" strokeWidth="1.500" />
  </g>,
  <g>
    {sq("url(#msg)")}
    <path d="M0-20c13 0 22 8 22 18S13 16 0 16c-2 0-4 0-6-.6-2 3-6 5-9 5 2-2 3-4 3-7C-18 10-22 4-22-2c0-10 9-18 22-18z" fill="#f4fbf2" />
    <Badge x={23} t="1" />
  </g>,
  <g>
    {sq("#f8f8f8")}
    <path d="M-29-18h58M-29-9h58M-29 0h58M-29 9h58M-29 18h58" stroke="#c9c9c9" strokeWidth="1.500" />
    <path d="M-20-29v58" stroke="#eaa0a0" strokeWidth="1.200" />
    <path d="M23-34 27-32 2 24-7 33-4 21z" fill="#8fa5b5" stroke="#5c6b77" />
  </g>,
  <g>
    {sq("#fff")}
    <rect x="-8" y="-20" width="29" height="39" rx="3" fill="#2e9d62" />
    <path d="M7-20h11a3 3 0 0 1 3 3v7H7z" fill="#5cc48b" />
    <path d="M-8 4h29v12a3 3 0 0 1-3 3H-5a3 3 0 0 1-3-3z" fill="#1d6b3f" />
    <rect x="-25" y="-11" width="24" height="22" rx="3" fill="#1a7343" />
    <text x="-13" y="6.500" textAnchor="middle" fontSize="17" fontWeight="bold" fill="#fff" fontFamily="Inter, sans-serif">X</text>
  </g>,
  <g>
    {sq("url(#mail)")}
    <rect x="-21" y="-13" width="42" height="26" rx="3" fill="#f3f4f5" />
    <path d="m-20-11 20 16 20-16M-20 12-5 0M20 12 5 0" fill="none" stroke="#9aa0a6" strokeWidth="1.600" />
    <Badge x={14} w={44} t="4,488" size={14.500} />
  </g>,
  <g>
    {sq("#fff")}
    <circle cx="2" r="20" fill="#d9694a" />
    <path d="M2-20a20 20 0 0 1 20 20H2z" fill="#ef9b80" />
    <path d="M2 0h20A20 20 0 0 1-10 16z" fill="#c4502f" />
    <rect x="-23" y="-11" width="24" height="23" rx="3" fill="#b5412a" />
    <text x="-11" y="7" textAnchor="middle" fontSize="18" fontWeight="bold" fill="#fff" fontFamily="Inter, sans-serif">P</text>
  </g>,
  <g>
    {petals.map((a) => <path key={a} d="M0-6C-5-14-5-24 0-33 5-24 5-14 0-6z" fill={a % 40 ? "#d873ee" : "#b552d4"} transform={`rotate(${a})`} />)}
    <circle r="7.500" fill="#2b2230" />
    <circle r="4" fill="#5e4a5e" />
  </g>,
  <g fill="#78a0dc">
    <path d="M-29-29H29v8H-20V28h-9z" />
    <path d="M-13-13h9V4h6v-17h9V27h-20v-8H2v-7h-15z" />
    <path d="M18-13h9V12H15V5h3z" />
  </g>,
  <g>
    {sq("#3c3d41")}
    <path d="M-29.500 4h59v12a13 13 0 0 1-13 13h-33a13 13 0 0 1-13-13z" fill="#101012" />
    <circle r="20" fill="#3aa0f0" stroke="#d3d9de" strokeWidth="6.500" />
    <circle cy="3" r="10" fill="#86d2fb" />
    <path d="m6 8 15 15" stroke="#d3d9de" strokeWidth="7" />
  </g>,
  terminalIcon,
  terminalIcon,
  <g>
    {sq("#fff")}
    <rect x="-12" y="-20" width="33" height="39" rx="3" fill="#2f6fd0" />
    <path d="M-12-10v-7a3 3 0 0 1 3-3h27a3 3 0 0 1 3 3v7z" fill="#5aa5ea" />
    <path d="M-12 8h33v8a3 3 0 0 1-3 3H-9a3 3 0 0 1-3-3z" fill="#1b3f94" />
    <rect x="-24" y="-11" width="23" height="22" rx="3" fill="#1d52b0" />
    <text x="-12.500" y="6" textAnchor="middle" fontSize="16" fontWeight="bold" fill="#fff" fontFamily="Inter, sans-serif">W</text>
  </g>,
  <g>
    <rect x="-33" y="-31" width="66" height="62" fill="#f7f7f7" stroke="#d0d0d0" />
    <FaJava x="-20" y="-27" size="40" color="#5b87a8" />
    <path d="M1-25c6 6-8 9-4 17M7-18c4 4-6 6-3 10" fill="none" stroke="#e0862f" strokeWidth="2.500" strokeLinecap="round" />
    <path d="M-24-18c-7 10-7 24 0 36M24-18c7 10 7 24 0 36" fill="none" stroke="#5b7f9c" strokeWidth="3.500" />
    <rect x="-18" y="12" width="36" height="17" fill="#f7f7f7" />
    <text y="24" textAnchor="middle" fontSize="14" fill="#e0862f" fontFamily="Inter, sans-serif">Java</text>
  </g>,
];

const dockRight = [
  <g>
    <path d="M-20-22C-14-42 14-42 20-22z" fill="#6f7072" />
    <rect x="-27" y="-26" width="54" height="56" rx="9" fill="#2167a5" />
    <path d="M-27-18c0-6 4-8 9-8h36c5 0 9 2 9 8z" fill="#5c9a3e" />
    <path d="M-27 8h54v13a9 9 0 0 1-9 9h-36a9 9 0 0 1-9-9z" fill="#1d4f94" />
    <path d="M2-12-12 18M-2-12 12 18M-18 8H18" stroke="#7fa6ca" strokeWidth="4" strokeLinecap="round" />
  </g>,
  <g>
    <path d="M-26-28H10l16 14V32h-52z" fill="#e9e9e9" />
    <path d="M10-28v14h16z" fill="#fff" stroke="#c9c9c9" />
    <path d="M-19-14H4M-19-8H4M-19-2h14M-19 4h14M-19 10h36M0-2h17v10H0z" stroke="#b5b5b5" strokeWidth="2" fill="#d6d6d6" />
    <text y="26" textAnchor="middle" fontSize="10" fill="#666" fontFamily="Inter, sans-serif">DOCX</text>
  </g>,
  <g>
    <path d="M-16-35H18V-20H-16z" fill="#dcdcdc" stroke="#bbb" />
    <path d="M-30-22H14L30-6V25h-60z" fill="#efefef" />
    <path d="M14-22v16h16z" fill="#fff" stroke="#c9c9c9" />
    <path d="M-24-14H6M-24-8H10M-24-2H24" stroke="#c9c9c9" strokeWidth="1.500" />
    <rect x="-24" y="2" width="48" height="9" fill="#9b9b9b" />
    <text y="20" textAnchor="middle" fontSize="10" fill="#666" fontFamily="Inter, sans-serif">XLSX</text>
  </g>,
  <g>
    <path d="m-22-24 6-10 8 4 6-6 8 6 8-4 8 8v8h-44z" fill="#c9cdd0" />
    <path d="m-18-26 6-4 6 6 4-8 8 6 6-6 5 6" stroke="#3d4044" strokeWidth="2.500" fill="none" />
    <path d="M-25-24h50l-8 50c-1 5-5 7-17 7s-16-2-17-7z" fill="url(#can)" />
    <ellipse cy="-24" rx="25" ry="4" fill="none" stroke="#a3a6a8" strokeWidth="1.500" />
  </g>,
];

function DockSlot({ icon, dot, dotColor }) {
  return (
    <div className="flex h-[92px] w-[76px] shrink-0 flex-col items-center pt-[5px]">
      <svg className="h-[76px] w-[76px] overflow-visible" viewBox="-38 -38 76 76">{icon}</svg>
      {dot && <div className={"mt-[-1px] size-[8px] rounded-full " + dotColor} />}
    </div>
  );
}

function Dock() {
  return (
    <div className="absolute top-[1695px] left-[429px] flex h-[95px] w-[2024px] rounded-[28px] border-2 border-[#7e8592] bg-[linear-gradient(to_right,#536282_0%,#4f6082_32%,#6a7182_45%,#878587_58%,#858386_90%,#5f6c85_98%)] pl-[2px] shadow-[0_0_60px_20px_rgba(60,60,60,0.3)]">
      <svg className="h-0 w-0">
        <defs>
          <linearGradient id="finder" x1="0" y1="0" x2="0" y2="1"><stop offset="0" stopColor="#52b9f5" /><stop offset="1" stopColor="#2c6fe8" /></linearGradient>
          <linearGradient id="silver" x1="0" y1="0" x2="0" y2="1"><stop offset="0" stopColor="#d9e0e4" /><stop offset="1" stopColor="#8f8f8f" /></linearGradient>
          <linearGradient id="msg" x1="0" y1="0" x2="0" y2="1"><stop offset="0" stopColor="#7fe67a" /><stop offset="1" stopColor="#47bf4c" /></linearGradient>
          <linearGradient id="mail" x1="0" y1="0" x2="0" y2="1"><stop offset="0" stopColor="#3a6fe8" /><stop offset="1" stopColor="#5cbcf7" /></linearGradient>
          <linearGradient id="can" x1="0" y1="0" x2="1" y2="0"><stop offset="0" stopColor="#4b4e50" /><stop offset=".4" stopColor="#97999b" /><stop offset="1" stopColor="#444749" /></linearGradient>
        </defs>
      </svg>
      {dockIcons.map((ic, i) => (
        <DockSlot key={i} icon={ic} dot={i !== 1 && i !== 2} dotColor={i > 14 ? "bg-white" : "bg-[#c5d6f7]"} />
      ))}
      <div className="mt-[11px] ml-[19px] h-[70px] w-[2px] shrink-0 bg-[#b2b1b3]" />
      <div className="ml-[15px] flex">
        {dockRight.map((ic, i) => (
          <DockSlot key={i} icon={ic} />
        ))}
      </div>
    </div>
  );
}

export default function App() {
  return (
    <div className="relative h-[1800px] w-[2880px] overflow-hidden bg-[#f9f9f8] font-['Liberation_Sans',Arial,sans-serif] text-black">
      <Toolbar />
      <TabBar />
      <div className="flex">
        <div className="flex h-[1639px] w-[2850px] flex-col bg-[linear-gradient(to_bottom,#f9f9f8_0px,#f9f9f8_300px,#f3f3f2_430px,#e4e6e9_750px,#dfe2e4_980px,#d2d5de_1180px,#d4d7da_1290px,#d3d4d8_1370px,#cccfd4_1639px)]">
          <Nav />
          <div className="flex h-[52px] items-center justify-center pt-[7px] text-[36px] leading-none font-bold">
            <Fit w={868}>UCSC Genome Browser on Human (GRCh37/hg19)</Fit>
          </div>

          <div className="flex h-[42px] items-center pl-[778px] text-[32px] leading-none">
            <span className="pb-[4px]"><Fit w={80}>move</Fit></span>
            <Group
              className="ml-[8px]"
              items={[["<<<", "w-[69px]", 42], ["<<", "w-[63px]", 28], ["<", "w-[54px]", 14], [">", "w-[55px]", 14], [">>", "w-[62px]", 28], [">>>", "w-[67px]", 42]]}
            />
            <span className="ml-[8px] pb-[4px]"><Fit w={113}>zoom in</Fit></span>
            <Group
              className="ml-[8px]"
              items={[["1.5x", "w-[69px]", 42], ["3x", "w-[65px]", 26], ["10x", "w-[64px]", 37], ["base", "w-[75px]", 50]]}
            />
            <span className="ml-[9px] pb-[4px]"><Fit w={134}>zoom out</Fit></span>
            <Group
              className="ml-[7px]"
              items={[["1.5x", "w-[68px]", 42], ["3x", "w-[66px]", 26], ["10x", "w-[64px]", 37], ["100x", "w-[75px]", 50]]}
            />
          </div>

          <div className="mt-[20px] ml-[200px] h-[108px] w-[2589px] border-2 border-[#7f7f7f] bg-[#f4f4dc] pt-[10px] text-[32px] leading-none">
            <div className="flex h-[42px] items-center justify-center gap-[9px] pr-[2px]">
              <span className="pb-[4px]"><Fit w={607}>A guided tutorial is available for new users:</Fit></span>
              <Btn className="w-[159px]" tw={132}>Start tutorial</Btn>
            </div>
            <div className="flex h-[42px] items-center justify-center gap-[9px]">
              <Btn className="w-[87px]" tw={59}>Close</Btn>
              <Btn className="w-[209px]" tw={181}>Don't show again</Btn>
            </div>
          </div>

          <div className="mt-[10px] flex h-[48px] items-center pl-[615px] leading-none">
            <Btn className="mt-[2px] w-[156px]" tw={128}>multi-region</Btn>
            <div className="ml-[10px] flex h-[48px] w-[347px] items-center border-2 border-[#d0d0d0] bg-[#fbfafa] pt-[2px] pl-[5px] text-[28px]">
              <Fit w={333}>chr20:5,506,111-5,639,298</Fit>
            </div>
            <span className="ml-[10px] text-[32px]"><Fit w={169}>133,188 bp.</Fit></span>
            <div className="mt-[2px] ml-[9px] flex h-[42px] w-[731px] items-center border-2 border-[#7b7b7b] bg-white pt-[3px] pl-[6px] font-['Inter',sans-serif] text-[23px] text-[#757575]">
              <Fit w={700}>gene, chromosome range, search terms, help pages, see examples</Fit>
            </div>
            <Btn className="mt-[2px] ml-[10px] w-[53px]" tw={27}>go</Btn>
            <span className="mt-[2px] ml-[13px] text-[26px] text-[#14148f]"><Fit w={112} className="underline decoration-2 underline-offset-2">examples</Fit></span>
          </div>

          <div className="mt-[18px]">
            <Ideogram />
          </div>
          <div className="mt-[18px]">
            <Tracks />
          </div>

          <div className="flex h-[84px]">
            <Mover label="move start" lw={122} className="ml-[78px] w-[165px]" />
            <div className="ml-[99px] w-[2168px] pt-[9px] text-center text-[28px] leading-[32px]">
              <Fit w={2166}>{'Click on a feature for details. Shift+click+drag to zoom in. Click grey side bars for track options. Drag side bars or labels up or down to reorder tracks. Drag tracks left or right to'}</Fit>
              <Fit w={1499}>{'new position. Press "?" for keyboard shortcuts. Use drop-down controls below and press refresh to alter tracks displayed.'}</Fit>
            </div>
            <Mover label="move end" lw={114} className="ml-[97px] w-[165px] items-end" />
          </div>

          <div className="flex h-[46px] items-start pl-[147px]">
            <Btn className="w-[145px]" tw={117}>collapse all</Btn>
            <div className="ml-[634px] flex gap-[10px]">
              <Btn className="w-[158px]" tw={130}>track search</Btn>
              <Btn className="w-[102px]" tw={74}>hide all</Btn>
              <Btn className="w-[265px]" tw={237}>manage custom tracks</Btn>
              <Btn className="w-[126px]" tw={99}>configure</Btn>
              <Btn className="w-[105px]" tw={77}>reverse</Btn>
              <Btn className="w-[89px]" tw={62}>resize</Btn>
            </div>
            <Btn className="ml-[748px] w-[134px]" tw={106}>expand all</Btn>
          </div>

          <SectionBar title="Custom Tracks" />
          <div className="h-[80px] pl-[146px]">
            <div className="flex h-[40px] items-center text-[32px] leading-none">
              <svg className="mb-[2px] h-[27px] w-[22px]" viewBox="0 0 22 27">
                <path d="M0 3h7V0h8v3h7v3.500H0zM1.500 8h19v16a3 3 0 0 1-3 3h-13a3 3 0 0 1-3-3z" />
                <path d="M7 11v12M11 11v12M15 11v12" stroke="#cfd1d5" strokeWidth="1.600" />
              </svg>
              <span className="ml-[9px] pt-[2px] text-[#14148f]"><Fit w={96} className="underline decoration-2 underline-offset-2">pCHIC</Fit></span>
            </div>
            <div className="ml-[1px] flex h-[36px] w-[140px] items-center justify-between rounded-[9px] border-2 border-black bg-linear-to-b from-white to-[#e9e9e9] pr-[11px] pl-[15px] font-['Inter',sans-serif] text-[22px] leading-none">
              <Fit w={33}>full</Fit>
              <svg className="h-[20px] w-[11px]" viewBox="0 0 11 20">
                <path d="M5.500 0 11 8H0zM5.500 20 0 12h11z" />
              </svg>
            </div>
          </div>
          <SectionBar />
          <div className="ml-[1564px] h-[8px] w-[816px] rounded-b-[4px] border-2 border-t-0 border-black bg-[#dcdcdc]" />
        </div>
        <div className="h-[1639px] w-[30px] border-l-2 border-[#e6e6e6] bg-[#fafafa] pt-[5px] pl-[5px]">
          <div className="h-[510px] w-[17px] rounded-full bg-[#c1c1c1]" />
        </div>
      </div>

      <Dock />

      <div className="absolute top-[1608px] left-[2232px] flex h-[55px] w-[200px] items-center justify-center rounded-[11px] border-2 border-black bg-[#363f55] font-['Inter',sans-serif] text-[28px] leading-none text-white ring-2 ring-[#5b6273] ring-inset">
        <Fit w={143}>Downloads</Fit>
        <svg className="absolute top-[50px] left-[82px] h-[20px] w-[32px]" viewBox="0 0 32 20">
          <path d="M0 0H32L17.500 17.500Q16 19 14.500 17.500z" fill="#363f55" />
          <path d="M2 1.500 14.500 17.500Q16 19 17.500 17.500L30 1.500" fill="none" stroke="#000" strokeWidth="1.600" />
        </svg>
      </div>
    </div>
  );
}
